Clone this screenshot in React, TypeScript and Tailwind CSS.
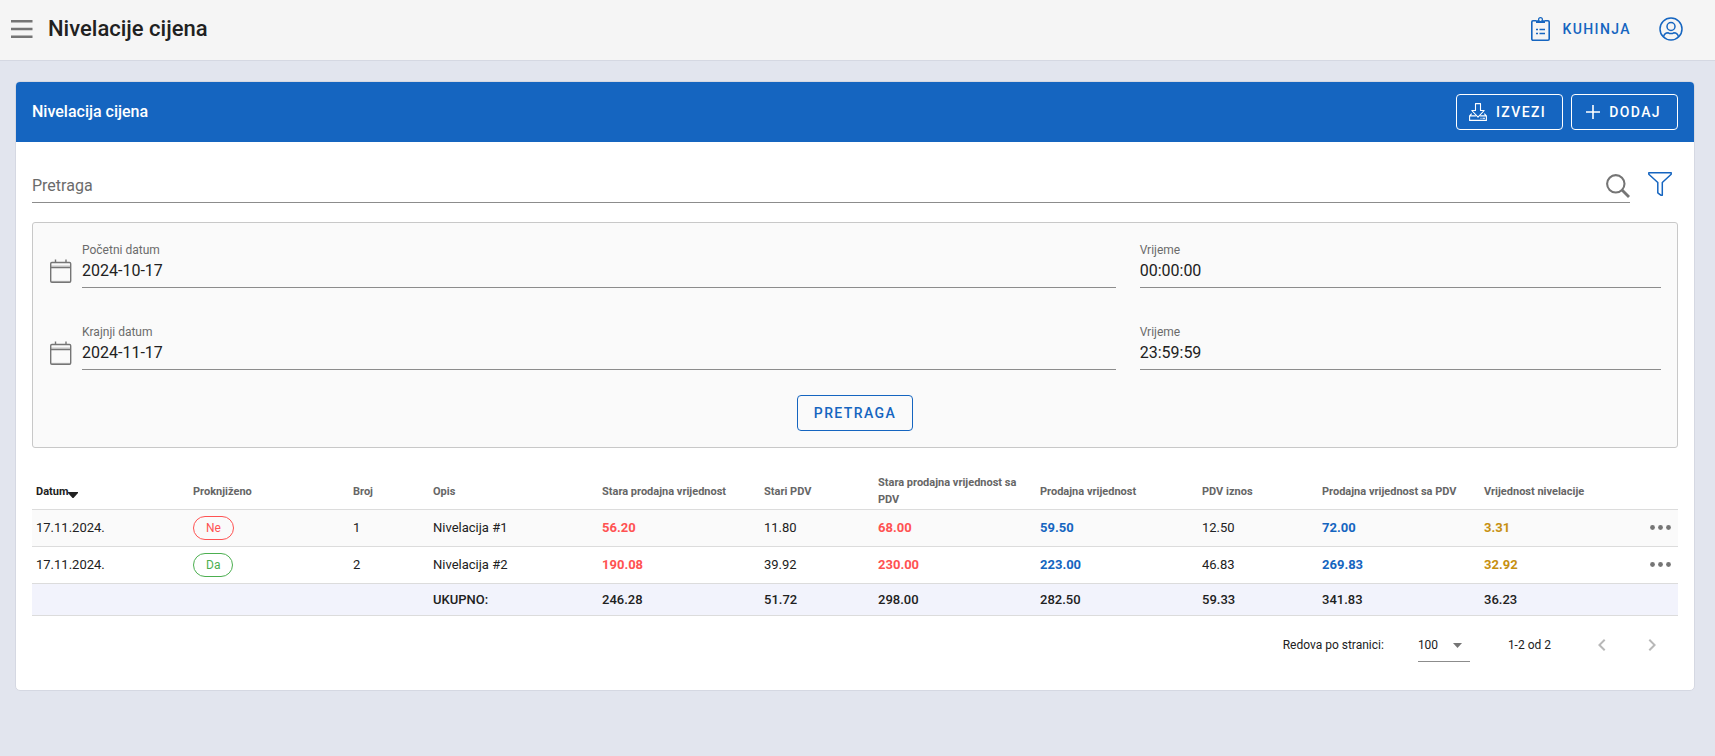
import React, { useState } from 'react';

type Tone = 'red' | 'blue' | 'gold' | 'plain';

interface Column {
  key: string;
  label: string;
  width: string;
  tone: Tone;
}

interface Row {
  datum: string;
  proknjizeno: boolean;
  broj: number;
  opis: string;
  values: string[];
}

const textColumns = [
  { label: 'Proknjiženo', width: 'w-[160px]' },
  { label: 'Broj', width: 'w-[80px]' },
  { label: 'Opis', width: 'w-[169px]' },
];

const valueColumns: Column[] = [
  { key: 'stara', label: 'Stara prodajna vrijednost', width: 'w-[162px]', tone: 'red' },
  { key: 'stariPdv', label: 'Stari PDV', width: 'w-[114px]', tone: 'plain' },
  { key: 'staraPdv', label: 'Stara prodajna vrijednost sa PDV', width: 'w-[162px]', tone: 'red' },
  { key: 'prodajna', label: 'Prodajna vrijednost', width: 'w-[162px]', tone: 'blue' },
  { key: 'pdv', label: 'PDV iznos', width: 'w-[120px]', tone: 'plain' },
  { key: 'prodajnaPdv', label: 'Prodajna vrijednost sa PDV', width: 'w-[162px]', tone: 'blue' },
  { key: 'nivelacija', label: 'Vrijednost nivelacije', width: 'w-[162px]', tone: 'gold' },
];

const toneClass: Record<Tone, string> = {
  red: 'font-bold text-[#ff5252]',
  blue: 'font-bold text-[#1565c0]',
  gold: 'font-bold text-[#c79010]',
  plain: '',
};

const rows: Row[] = [
  {
    datum: '17.11.2024.',
    proknjizeno: false,
    broj: 1,
    opis: 'Nivelacija #1',
    values: ['56.20', '11.80', '68.00', '59.50', '12.50', '72.00', '3.31'],
  },
  {
    datum: '17.11.2024.',
    proknjizeno: true,
    broj: 2,
    opis: 'Nivelacija #2',
    values: ['190.08', '39.92', '230.00', '223.00', '46.83', '269.83', '32.92'],
  },
];

const totals = ['246.28', '51.72', '298.00', '282.50', '59.33', '341.83', '36.23'];

const MenuIcon = () => (
  <svg width="22" height="18" viewBox="0 0 22 18" fill="#757575">
    <path d="M0 0h21.500v2.500H0zM0 7.700h21.500v2.500H0zM0 15.500h21.500V18H0z" />
  </svg>
);

const ClipboardIcon = () => (
  <svg width="19" height="24" viewBox="0 0 19 24" fill="none" stroke="currentColor" strokeWidth="1.600">
    <path d="M5 3.800H2A1.200 1.200 0 0 0 .8 5v17A1.200 1.200 0 0 0 2 23.200h15a1.200 1.200 0 0 0 1.200-1.200V5A1.200 1.200 0 0 0 17 3.800h-3" />
    <path d="M5 3.200h2.400a2.100 2.100 0 0 1 4.200 0H14V6H5z" fill="currentColor" stroke="none" />
    <circle cx="9.500" cy="2.600" r="1.900" fill="#f5f5f5" strokeWidth="1.200" />
    <path d="M5 12.500h2M5 16.500h2M8.500 12.500H14M8.500 16.500H14" />
  </svg>
);

const AccountIcon = () => (
  <svg width="24" height="24" viewBox="0 0 24 24" fill="none" stroke="currentColor" strokeWidth="1.500">
    <circle cx="12" cy="12" r="11" />
    <circle cx="12" cy="9.500" r="4" />
    <path d="M4.500 20c.5-2.800 2.300-4.200 4.700-4.200 1 .6 1.800.8 2.800.8s1.800-.2 2.800-.8c2.400 0 4.200 1.400 4.700 4.200" />
  </svg>
);

const ExportIcon = () => (
  <svg width="18" height="18" viewBox="0 0 18 18" fill="none" stroke="currentColor" strokeWidth="1.100" strokeLinejoin="round">
    <path d="M6.500.6h5v6.900h3.700L9 14.200 2.800 7.500h3.700z" />
    <path d="M2.700 10.600L.6 12.900v4.500h16.800v-4.500l-2.100-2.300M.6 12.900h6.300M11.100 12.900h6.300" />
    <path d="M11.500 15.200h1M13.500 15.200H16" />
  </svg>
);

const PlusIcon = () => (
  <svg width="14" height="14" viewBox="0 0 14 14" stroke="currentColor" strokeWidth="1.600">
    <path d="M7 0v14M0 7h14" />
  </svg>
);

const SearchIcon = () => (
  <svg width="24" height="24" viewBox="0 0 24 24" fill="none" stroke="#757575" strokeWidth="2.100">
    <circle cx="9.800" cy="9.800" r="8.700" />
    <path d="M16 16l7 7" strokeWidth="2.800" />
  </svg>
);

const FilterIcon = () => (
  <svg width="24" height="24" viewBox="0 0 24 24" fill="none" stroke="currentColor" strokeWidth="1.500" strokeLinejoin="round">
    <path d="M.8.800h22.400v1.400L14.300 10.500v12.700h-1.500l-3-2.400V10.500L.8 2.200z" />
  </svg>
);

const CalendarIcon = () => (
  <svg width="24" height="24" viewBox="0 0 24 24" fill="none" stroke="#757575" strokeWidth="1.400">
    <rect x="1.700" y="3.500" width="20" height="19.800" rx="1.200" />
    <path d="M1.700 8.500h20M6.500.5v3M17 .5v3" />
    <path d="M1.700 7h20M1.700 22.300h20" strokeWidth="1" opacity="0.400" />
  </svg>
);

const ChevronIcon = ({ flip = false }: { flip?: boolean }) => (
  <svg width="24" height="24" viewBox="0 0 24 24" fill="currentColor">
    <path d={flip ? 'M8.590 16.580L13.170 12 8.590 7.410 10 6l6 6-6 6z' : 'M15.410 16.580L10.830 12l4.580-4.590L14 6l-6 6 6 6z'} />
  </svg>
);

interface FieldProps {
  id: string;
  label: string;
  value: string;
}

const Field: React.FC<FieldProps> = ({ id, label, value }) => {
  const [text, setText] = useState(value);

  return (
    <div className="flex min-w-0 flex-1 flex-col border-b border-[#8c8c8c] pb-1">
      <label htmlFor={id} className="text-xs leading-4 text-[#6b6b6b]">{label}</label>
      <input
        id={id}
        value={text}
        onChange={(e) => setText(e.target.value)}
        className="h-[25px] w-full bg-transparent text-base outline-none"
      />
    </div>
  );
};

const FilterRow = ({ id, label, date, time }: { id: string; label: string; date: string; time: string }) => (
  <div className="grid grid-cols-12 gap-6">
    <div className="col-span-8 flex items-end gap-[9px]">
      <span className="shrink-0 pb-[5px]"><CalendarIcon /></span>
      <Field id={`${id}-datum`} label={label} value={date} />
    </div>
    <div className="col-span-4 flex">
      <Field id={`${id}-vrijeme`} label="Vrijeme" value={time} />
    </div>
  </div>
);

const StatusChip = ({ active }: { active: boolean }) => (
  <span
    className={`inline-flex h-6 items-center rounded-full border px-3 text-xs ${
      active ? 'border-[#4caf50] text-[#4caf50]' : 'border-[#ff5252] text-[#ff5252]'
    }`}
  >
    {active ? 'Da' : 'Ne'}
  </span>
);

const PriceTable = () => (
  <table className="w-full table-fixed border-collapse text-left text-[13px]">
    <thead>
      <tr className="h-[37px] border-b border-[#dcdcdc] text-[11px] leading-[17px] text-[#666666]">
        <th className="w-[157px] px-1 pt-[2px] font-bold text-[#212121]">
          <button className="flex items-center">
            Datum
            <svg className="mt-2" width="10" height="6" viewBox="0 0 10 6" fill="currentColor">
              <path d="M0 0h10v1L5.500 6h-1L0 1z" />
            </svg>
          </button>
        </th>
        {textColumns.map((col) => (
          <th key={col.label} className={`${col.width} px-1 pt-[2px] font-bold`}>{col.label}</th>
        ))}
        {valueColumns.map((col) => (
          <th key={col.key} className={`${col.width} px-1 pt-[2px] font-bold`}>{col.label}</th>
        ))}
        <th />
      </tr>
    </thead>
    <tbody>
      {rows.map((row) => (
        <tr key={row.broj} className="h-[37px] border-b border-[#dcdcdc] odd:bg-[#fafafa]">
          <td className="px-1">{row.datum}</td>
          <td className="px-1"><StatusChip active={row.proknjizeno} /></td>
          <td className="px-1">{row.broj}</td>
          <td className="px-1">{row.opis}</td>
          {valueColumns.map((col, i) => (
            <td key={col.key} className={`px-1 ${toneClass[col.tone]}`}>{row.values[i]}</td>
          ))}
          <td className="px-[7px]">
            <button className="ml-auto block text-[#757575]" aria-label="Opcije">
              <svg width="21" height="5" viewBox="0 0 21 5" fill="currentColor">
                <circle cx="2.500" cy="2.500" r="2.400" />
                <circle cx="10.500" cy="2.500" r="2.400" />
                <circle cx="18.500" cy="2.500" r="2.400" />
              </svg>
            </button>
          </td>
        </tr>
      ))}
    </tbody>
    <tfoot>
      <tr className="h-8 border-b border-[#dcdcdc] bg-[#f2f3fc] font-medium">
        <td colSpan={3} />
        <td className="px-1 pt-[2px]">UKUPNO:</td>
        {totals.map((total, i) => (
          <td key={valueColumns[i].key} className="px-1 pt-[2px]">{total}</td>
        ))}
        <td />
      </tr>
    </tfoot>
  </table>
);

const Pagination = () => (
  <div className="flex items-center justify-end pt-[13px] text-xs">
    <label htmlFor="page-size" className="mr-[34px]">Redova po stranici:</label>
    <div className="relative mr-[38px] border-b border-[#8c8c8c]">
      <select id="page-size" defaultValue="100" className="h-8 w-[52px] appearance-none bg-transparent outline-none">
        <option>25</option>
        <option>50</option>
        <option>100</option>
      </select>
      <svg className="pointer-events-none absolute right-2 top-[14px]" width="9" height="5" viewBox="0 0 9 5" fill="#757575">
        <path d="M0 0h9L4.500 5z" />
      </svg>
    </div>
    <span className="mr-[39px]">1-2 od 2</span>
    <div className="mr-[14px] flex gap-[26px] text-[#b8b8b8]">
      <button disabled aria-label="Prethodna"><ChevronIcon /></button>
      <button disabled aria-label="Sljedeća"><ChevronIcon flip /></button>
    </div>
  </div>
);

const App: React.FC = () => {
  const [search, setSearch] = useState('');

  return (
    <div className="min-h-screen bg-[#e2e5ee] font-['Roboto',sans-serif] text-[#212121]">
      <header className="flex h-[61px] items-center border-b border-[#d5d8e2] bg-[#f5f5f5] pb-[2px] pl-[11px] pr-8">
        <button aria-label="Izbornik" className="mr-[15px]"><MenuIcon /></button>
        <h1 className="pb-[2px] text-[22px] font-medium">Nivelacije cijena</h1>
        <a href="#kuhinja" className="ml-auto flex items-center gap-3 text-sm font-medium tracking-widest text-[#1565c0]">
          <ClipboardIcon />
          KUHINJA
        </a>
        <button aria-label="Račun" className="ml-7 text-[#1565c0]"><AccountIcon /></button>
      </header>

      <main className="pb-8 pl-[15px] pr-5 pt-5">
        <section className="overflow-hidden rounded-[5px] border border-[#d5d8e2] bg-white">
          <div className="flex h-[60px] items-center gap-2 bg-[#1565c0] px-4 text-white">
            <h2 className="mr-auto text-base font-medium">Nivelacija cijena</h2>
            <button className="flex h-9 items-center gap-[9px] rounded border border-white pl-3 pr-4 text-sm font-medium tracking-widest">
              <ExportIcon />
              IZVEZI
            </button>
            <button className="flex h-9 items-center gap-[9px] rounded border border-white pl-[14px] pr-4 text-sm font-medium tracking-widest">
              <PlusIcon />
              DODAJ
            </button>
          </div>

          <div className="px-4 pb-7 pt-[27px]">
            <div className="flex items-center gap-[18px] pr-[6px]">
              <div className="flex h-[34px] flex-1 items-center border-b border-[#8c8c8c]">
                <input
                  aria-label="Pretraga"
                  placeholder="Pretraga"
                  value={search}
                  onChange={(e) => setSearch(e.target.value)}
                  className="h-8 flex-1 bg-transparent text-base outline-none placeholder:text-[#6b6b6b]"
                />
                <button aria-label="Traži"><SearchIcon /></button>
              </div>
              <button aria-label="Filter" className="pb-1 text-[#1565c0]"><FilterIcon /></button>
            </div>

            <div className="mt-[19px] rounded-[3px] border border-[#c8c8c8] bg-[#fafafa] px-4 pb-4 pt-[19px]">
              <div className="flex flex-col gap-9">
                <FilterRow id="pocetni" label="Početni datum" date="2024-10-17" time="00:00:00" />
                <FilterRow id="krajnji" label="Krajnji datum" date="2024-11-17" time="23:59:59" />
              </div>
              <div className="mt-[25px] flex justify-center">
                <button className="h-9 rounded border border-[#1565c0] px-4 text-sm font-medium tracking-widest text-[#1565c0]">
                  PRETRAGA
                </button>
              </div>
            </div>

            <div className="mt-6">
              <PriceTable />
              <Pagination />
            </div>
          </div>
        </section>
      </main>
    </div>
  );
};

export default App;
